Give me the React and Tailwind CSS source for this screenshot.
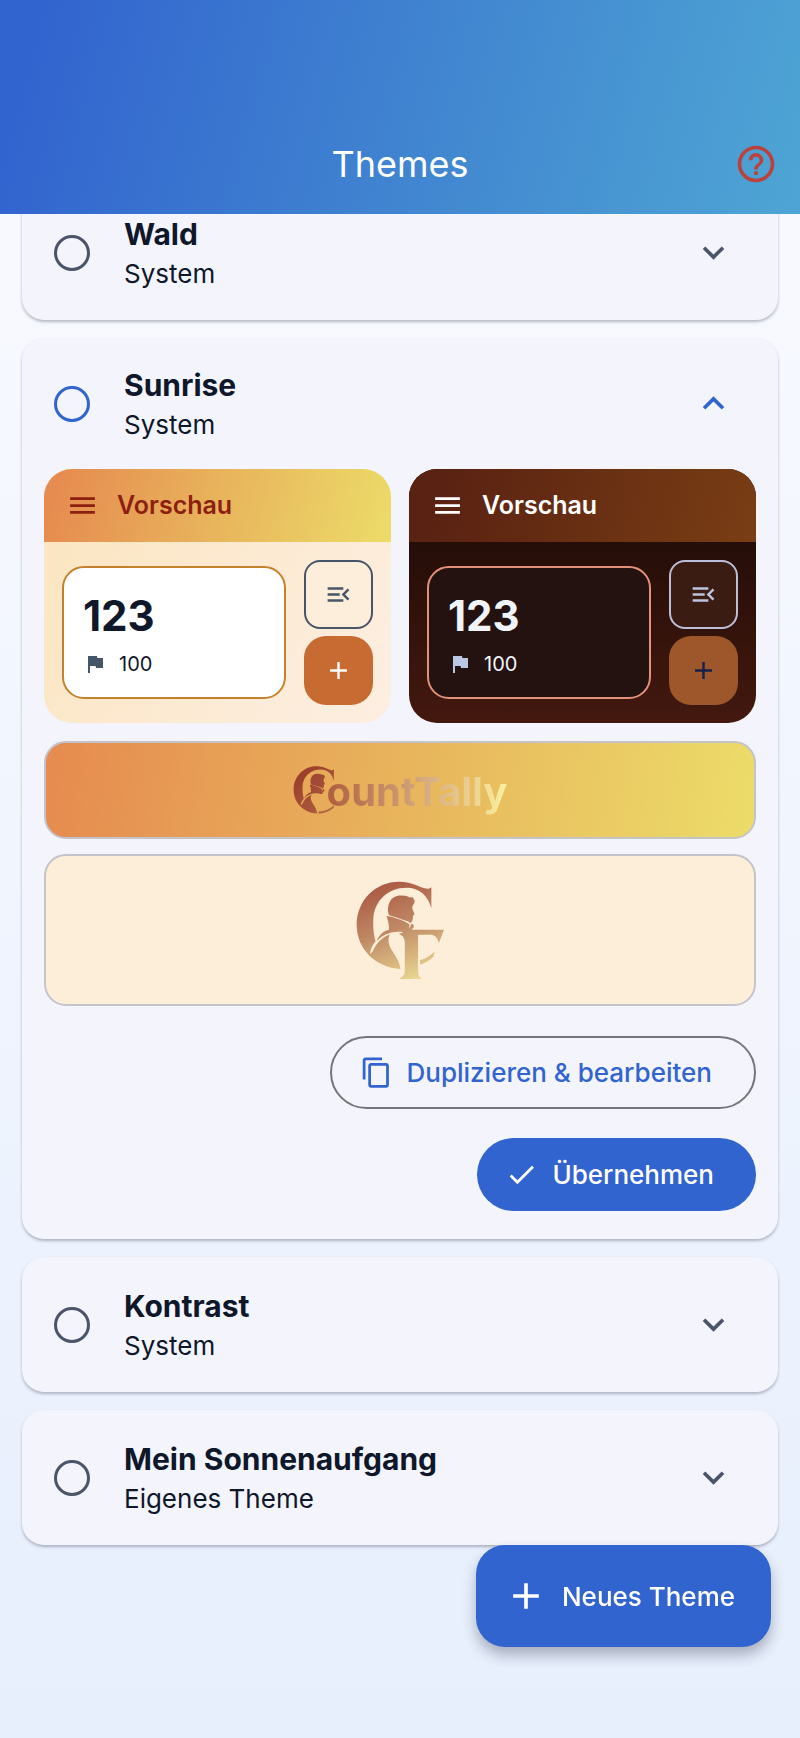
import { useState } from "react";
import {
  MdAdd,
  MdCheck,
  MdContentCopy,
  MdExpandLess,
  MdExpandMore,
  MdFlag,
  MdHelpOutline,
  MdMenu,
  MdMenuOpen,
} from "react-icons/md";

const THEMES = [
  { id: "wald", name: "Wald", kind: "System" },
  { id: "sunrise", name: "Sunrise", kind: "System" },
  { id: "kontrast", name: "Kontrast", kind: "System" },
  { id: "sonnenaufgang", name: "Mein Sonnenaufgang", kind: "Eigenes Theme" },
];

const LIGHT = {
  shell: "bg-linear-[120deg,#fbe5bf,#fdeee2]",
  bar: "bg-linear-[105deg,#e68c50_5%,#e8b45c_50%,#ecdc69] text-[#8c1f10]",
  counter: "border-[#c5822c] bg-white text-[#0f172a]",
  flag: "text-[#475569]",
  outlined: "border-[#475569] bg-[#fdeedb] text-[#475569]",
  filled: "bg-[#c76b32] text-white",
};

const DARK = {
  shell: "bg-linear-to-b from-[#260e08] from-30% to-[#43180f]",
  bar: "bg-linear-[105deg,#5a2212_10%,#793e14] text-white",
  counter: "border-[#e3917b] bg-[#241210] text-[#f1f5f9]",
  flag: "text-[#b9c6e4]",
  outlined: "border-[#bcbfd8] bg-[#3b1c13] text-[#bcc3e0]",
  filled: "bg-[#9d572b] text-[#14204a]",
};

function Portrait({ id, withT, className }) {
  return (
    <svg
      viewBox={withT ? "76 48 268 298" : "76 48 232 268"}
      className={className}
      role="img"
      aria-label="CountTally"
    >
      <defs>
        <linearGradient id={id} gradientUnits="userSpaceOnUse" x1="150" y1="70" x2={withT ? 250 : 400} y2="345">
          <stop offset="0" stopColor={withT ? "#ad5d47" : "#9c3f2d"} />
          <stop offset={withT ? 0.45 : 0.5} stopColor={withT ? "#c08a66" : "#a9563a"} />
          <stop offset="1" stopColor={withT ? "#e9d691" : "#c88a5c"} />
        </linearGradient>
      </defs>
      <g fill={`url(#${id})`}>
        <path d="M303 66V130C292 92 268 68 228 68C174 68 130 106 128 164C127 192 130 212 135 229C126 240 119 252 118 268C121 265 124 262 126 261C137 236 152 219 178 208C171 222 174 237 181 251C194 273 207 288 210 313C135 309 78 253 78 180C78 107 134 50 206 50C240 50 262 63 283 70C292 73 299 71 303 66Z" />
        <path d="M174 148C171 138 171 126 177 112C183 98 198 91 213 92C226 91 234 96 239 99C237 96 240 94 242 98C246 95 250 98 249 103C253 104 254 110 250 117C246 122 245 126 246 132L252 147C252 150 249 150 248 152L247 162C246 171 242 174 236 174L234 170C217 165 199 157 185 154C180 153 177 152 174 148Z" />
        <path d="M168 153C190 156 217 165 237 178L236 192L243 177C249 178 251 181 250 187L241 198C240 203 236 207 228 205C202 195 164 202 138 229C149 205 162 198 175 195C176 182 173 167 168 153Z" />
        {withT ? (
          <>
            <path d="M199 205C211 208 218 203 225 196C232 193 242 195 250 195H341L325 236C323 220 315 211 301 210H263V317C263 332 266 336 274 343H206C216 336 223 332 223 317V234C223 220 217 209 199 205Z" />
            <path d="M269 286C287 281 301 272 313 260L309 276C297 288 284 295 269 300Z" />
          </>
        ) : (
          <path d="M216 303C253 299 281 287 303 268V281C282 299 253 311 219 314Z" />
        )}
      </g>
    </svg>
  );
}

function Preview({ look }) {
  return (
    <div className={`min-w-0 flex-1 overflow-hidden rounded-[28px] ${look.shell}`}>
      <div className={`flex h-[73px] items-center gap-[18px] px-[22px] ${look.bar}`}>
        <MdMenu className="size-[33px]" aria-hidden="true" />
        <span className="text-[25px] font-semibold">Vorschau</span>
      </div>
      <div className="flex items-center gap-[18px] p-[18px]">
        <div className={`flex h-[133px] min-w-0 flex-1 flex-col justify-center rounded-[22px] border-2 pt-3 pl-[19px] ${look.counter}`}>
          <span className="text-[42px] leading-[50px] font-bold">123</span>
          <span className="flex items-center gap-3 text-[20px] leading-[46px]">
            <MdFlag className={`size-6 ${look.flag}`} aria-hidden="true" />
            100
          </span>
        </div>
        <div className="flex flex-col gap-[7px]">
          <button
            type="button"
            aria-label="Menü öffnen"
            className={`flex size-[69px] items-center justify-center rounded-[16px] border-2 ${look.outlined}`}
          >
            <MdMenuOpen className="size-[29px]" />
          </button>
          <button
            type="button"
            aria-label="Erhöhen"
            className={`flex size-[69px] items-center justify-center rounded-[22px] ${look.filled}`}
          >
            <MdAdd className="size-[29px]" />
          </button>
        </div>
      </div>
    </div>
  );
}

function ThemeDetails() {
  return (
    <div className="flex flex-col gap-[18px] px-[22px] pb-7">
      <div className="flex gap-[18px]">
        <Preview look={LIGHT} />
        <Preview look={DARK} />
      </div>
      <div className="flex flex-col gap-[15px]">
        <div className="flex h-[98px] items-center justify-center rounded-[22px] border-2 border-[#c4c3cb] bg-linear-[98deg,#e68c50_2%,#e8b45c_50%,#ecdc69]">
          <Portrait id="wordmark" className="h-[48px] w-[42px]" />
          <span className="-ml-2 bg-linear-to-r from-[#ad5e3e] via-[#d6ab80] via-55% to-[#faf0a0] bg-clip-text pt-1 text-[40px] font-bold text-transparent">
            ountTally
          </span>
        </div>
        <div className="flex h-[152px] items-center justify-center rounded-[22px] border-2 border-[#c4c3cb] bg-[#fdeed9]">
          <Portrait id="emblem" withT className="h-[99px] w-[89px]" />
        </div>
      </div>
      <div className="flex flex-col items-end gap-[29px] pt-3">
        <button
          type="button"
          className="flex h-[73px] items-center gap-[14px] rounded-full border-2 border-[#74767e] pr-[42px] pl-7 text-[26px] font-medium text-[#3264cf]"
        >
          <MdContentCopy className="size-[33px]" aria-hidden="true" />
          Duplizieren &amp; bearbeiten
        </button>
        <button
          type="button"
          className="flex h-[73px] items-center gap-[14px] rounded-full bg-[#3264cf] pr-[42px] pl-7 text-[26px] font-medium text-white"
        >
          <MdCheck className="size-[33px]" aria-hidden="true" />
          Übernehmen
        </button>
      </div>
    </div>
  );
}

function ThemeCard({ theme, open, onToggle }) {
  const Chevron = open ? MdExpandLess : MdExpandMore;
  const tone = open ? "text-[#3264cf]" : "text-[#4b5468]";
  return (
    <section className="rounded-[22px] bg-[#f3f4fc] shadow-[0_2px_3px_rgba(30,35,60,0.3)]">
      <div className={`flex items-center pr-[43px] pl-8 ${open ? "h-[131px]" : "h-[135px]"}`}>
        <label className="flex min-w-0 flex-1 items-center gap-[34px]">
          <input
            type="radio"
            name="theme"
            value={theme.id}
            className={`m-0 size-9 shrink-0 appearance-none rounded-full border-[3px] border-current ${tone}`}
          />
          <span className="flex flex-col pt-[3px] text-[#0f172a]">
            <span className="text-[30px] leading-10 font-bold">{theme.name}</span>
            <span className="text-[26px] leading-10">{theme.kind}</span>
          </span>
        </label>
        <button
          type="button"
          onClick={onToggle}
          aria-expanded={open}
          aria-label={`${theme.name} Details`}
          className={tone}
        >
          <Chevron className="size-[43px]" />
        </button>
      </div>
      {open && <ThemeDetails />}
    </section>
  );
}

export default function App() {
  const [openId, setOpenId] = useState("sunrise");
  return (
    <div className="min-h-screen bg-linear-to-b from-[#fafbff] to-[#e7effd] font-[Inter,sans-serif]">
      <header className="relative z-10 grid h-[214px] grid-cols-[1fr_auto_1fr] items-end bg-linear-[105deg,#3264cf_5%,#4083d0_50%,#4ea5d4] px-[22px] pb-7">
        <h1 className="col-start-2 text-[36px] leading-[44px] text-white">Themes</h1>
        <button type="button" aria-label="Hilfe" className="justify-self-end text-[#b9443f]">
          <MdHelpOutline className="size-11" />
        </button>
      </header>
      <main className="-mt-[29px] flex flex-col gap-[18px] px-[22px] pb-48">
        {THEMES.map((theme) => (
          <ThemeCard
            key={theme.id}
            theme={theme}
            open={openId === theme.id}
            onToggle={() => setOpenId(openId === theme.id ? "" : theme.id)}
          />
        ))}
      </main>
      <button
        type="button"
        className="fixed right-[29px] bottom-[91px] z-20 flex h-[102px] items-center gap-[14px] rounded-[29px] bg-[#3264cf] pr-9 pl-7 text-[26px] font-medium text-white shadow-[0_8px_14px_rgba(30,35,60,0.32)]"
      >
        <MdAdd className="size-11" aria-hidden="true" />
        Neues Theme
      </button>
    </div>
  );
}
